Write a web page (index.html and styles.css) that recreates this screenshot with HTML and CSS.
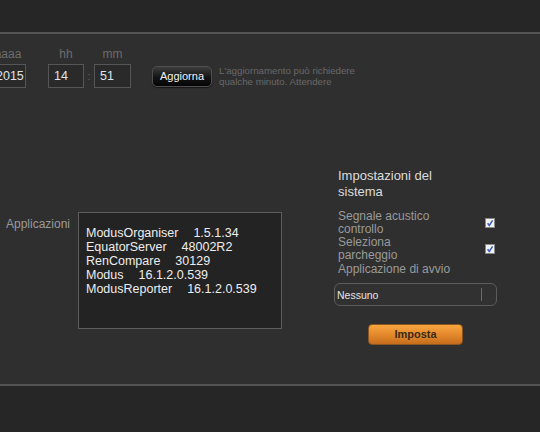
FILE: index.html
```html
<!DOCTYPE html>
<html lang="it">
<head>
<meta charset="utf-8">
<title>Impostazioni</title>
<link rel="stylesheet" href="styles.css">
</head>
<body>
<div class="topbar"></div>
<main class="main">
  <div class="datetime">
    <div class="field field-year">
      <div class="flabel">aaaa</div>
      <div class="box">2015</div>
    </div>
    <div class="field field-hh">
      <div class="flabel">hh</div>
      <div class="box">14</div>
    </div>
    <div class="colon">:</div>
    <div class="field field-mm">
      <div class="flabel">mm</div>
      <div class="box box-mm">51</div>
    </div>
    <button class="btn-dark">Aggiorna</button>
    <div class="hint">L'aggiornamento può richiedere<br>qualche minuto. Attendere</div>
  </div>

  <div class="lower">
    <div class="apps">
      <div class="apps-label">Applicazioni</div>
      <div class="apps-box">
        <div>ModusOrganiser<span class="ver">1.5.1.34</span></div>
        <div>EquatorServer<span class="ver">48002R2</span></div>
        <div>RenCompare<span class="ver">30129</span></div>
        <div>Modus<span class="ver">16.1.2.0.539</span></div>
        <div>ModusReporter<span class="ver">16.1.2.0.539</span></div>
      </div>
    </div>

    <div class="settings">
      <div class="settings-title">Impostazioni del sistema</div>
      <div class="opt">
        <div class="opt-label">Segnale acustico controllo</div>
        <span class="check"><svg viewBox="0 0 10 10" width="10" height="10"><path d="M2.6 5.2 L4.3 7.4 L7.6 2.4" fill="none" stroke="#3a5bc8" stroke-width="1.5"/></svg></span>
      </div>
      <div class="opt">
        <div class="opt-label">Seleziona parcheggio</div>
        <span class="check"><svg viewBox="0 0 10 10" width="10" height="10"><path d="M2.6 5.2 L4.3 7.4 L7.6 2.4" fill="none" stroke="#3a5bc8" stroke-width="1.5"/></svg></span>
      </div>
      <div class="opt-full">Applicazione di avvio</div>
      <div class="select">
        <span class="select-text">Nessuno</span>
        <span class="select-div"></span>
      </div>
      <div class="btn-row">
        <button class="btn-orange">Imposta</button>
      </div>
    </div>
  </div>
</main>
<div class="footer"></div>
</body>
</html>
```
FILE: styles.css
```css
html, body {
  margin: 0;
  padding: 0;
}
body {
  width: 540px;
  height: 432px;
  overflow: hidden;
  background: #262626;
  font-family: "Liberation Sans", Arial, sans-serif;
}
.topbar {
  height: 32px;
  background: #262626;
}
.main {
  height: 337px;
  background: #2f2f2f;
  border-top: 2px solid #545454;
  border-bottom: 2px solid #545454;
  padding-top: 13px;
  box-sizing: content-box;
}
.datetime {
  display: flex;
  align-items: flex-start;
  margin-left: -10px;
}
.field {
  display: flex;
  flex-direction: column;
  align-items: center;
}
.flabel {
  font-size: 12px;
  line-height: 14px;
  color: #6c6c6c;
  height: 14px;
  margin-bottom: 3px;
}
.box {
  width: 36px;
  height: 24px;
  box-sizing: border-box;
  border: 1px solid #565656;
  background: #2a2a2a;
  color: #dfe3ea;
  font-size: 12.5px;
  line-height: 22px;
  padding-left: 5px;
  align-self: stretch;
}
.field-year .box { width: 36px; }
.field-hh { margin-left: 22px; width: 36px; }
.field-year { width: 36px; }
.field-mm { width: 37px; }
.box-mm { width: 37px; }
.colon {
  width: 10px;
  text-align: center;
  margin-top: 17px;
  line-height: 24px;
  font-size: 11px;
  color: #5e5e5e;
}
.btn-dark {
  margin-top: 19px;
  margin-left: 21px;
  width: 60px;
  height: 21px;
  padding: 0;
  border: 1px solid #4e4e4e;
  border-radius: 5px;
  background: linear-gradient(#3d3d3d, #141414 55%, #050505);
  color: #f4f4f4;
  font-family: "Liberation Sans", Arial, sans-serif;
  font-size: 11px;
  line-height: 19px;
  box-shadow: 0 1px 1px rgba(0,0,0,0.5);
}
.hint {
  margin-top: 19px;
  margin-left: 7px;
  font-size: 9.7px;
  line-height: 10.5px;
  color: #696969;
}
.lower {
  display: flex;
  align-items: flex-start;
  margin-top: 80px;
}
.apps {
  display: flex;
  align-items: flex-start;
  margin-top: 44px;
  padding-left: 6px;
}
.apps-label {
  width: 72px;
  padding-top: 5px;
  font-size: 12px;
  line-height: 14px;
  color: #9a9a9a;
}
.apps-box {
  width: 204px;
  height: 117px;
  box-sizing: border-box;
  border: 1px solid #5e5e5e;
  background: #232323;
  padding: 13px 0 0 7px;
  color: #ededed;
  font-size: 12.5px;
  line-height: 14px;
}
.ver {
  margin-left: 15px;
}
.settings {
  margin-left: auto;
  margin-right: 43px;
  width: 163px;
}
.settings-title {
  padding-left: 4px;
  width: 120px;
  font-size: 13px;
  line-height: 16px;
  color: #dcdcdc;
  margin-bottom: 10px;
}
.opt {
  display: flex;
  align-items: center;
  justify-content: space-between;
  padding-left: 4px;
  padding-right: 2px;
  height: 26px;
}
.opt-label {
  width: 110px;
  font-size: 12px;
  line-height: 13px;
  color: #9a9a9a;
}
.check {
  display: block;
  width: 10px;
  height: 10px;
  box-sizing: border-box;
  background: #f2f2f2;
  border: 1px solid #8a8a8a;
}
.check svg {
  display: block;
  margin: -1px;
}
.opt-full {
  padding-left: 4px;
  font-size: 12px;
  line-height: 13px;
  color: #9a9a9a;
  margin-top: 1px;
}
.select {
  margin-top: 7px;
  height: 23px;
  box-sizing: border-box;
  border: 1px solid #5c5c5c;
  border-radius: 6px;
  background: #313131;
  display: flex;
  align-items: center;
  padding-left: 2px;
  padding-right: 14px;
}
.select-text {
  flex: 1;
  font-size: 10.5px;
  color: #e4e4e4;
}
.select-div {
  width: 1px;
  height: 13px;
  background: #6a6a6a;
}
.btn-row {
  display: flex;
  justify-content: center;
  margin-top: 18px;
}
.btn-orange {
  width: 95px;
  height: 21px;
  padding: 0;
  border: 1px solid #8a5520;
  border-radius: 4px;
  background: linear-gradient(#f7a540, #e58a2c 50%, #c56d1d);
  color: #3b2a18;
  font-family: "Liberation Sans", Arial, sans-serif;
  font-size: 11px;
  font-weight: bold;
  line-height: 19px;
}
.footer {
  height: 46px;
  background: #262626;
}
```
